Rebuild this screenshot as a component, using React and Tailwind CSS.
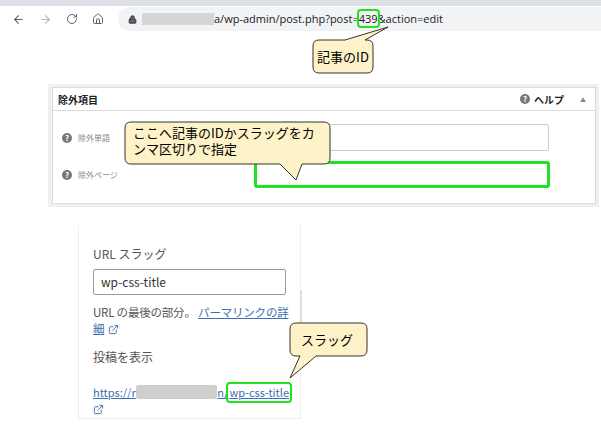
import React from "react";
import { ArrowLeft, ArrowRight, RotateCw, Home, Lock, ExternalLink } from "lucide-react";

// rounded callout with tail, drawn as one shape
function Callout({ box, tip, base, children, className }) {
  const [x, y, w, h] = box;
  const [b1, b2] = base;
  const r = 6;
  const onTop = tip[1] < y;
  const L = x, T = y, R = x + w, B = y + h;
  const d = onTop
    ? `M${L + r},${T} L${b1},${T} L${tip[0]},${tip[1]} L${b2},${T} L${R - r},${T} Q${R},${T} ${R},${T + r} L${R},${B - r} Q${R},${B} ${R - r},${B} L${L + r},${B} Q${L},${B} ${L},${B - r} L${L},${T + r} Q${L},${T} ${L + r},${T} Z`
    : `M${L + r},${T} L${R - r},${T} Q${R},${T} ${R},${T + r} L${R},${B - r} Q${R},${B} ${R - r},${B} L${b2},${B} L${tip[0]},${tip[1]} L${b1},${B} L${L + r},${B} Q${L},${B} ${L},${B - r} L${L},${T + r} Q${L},${T} ${L + r},${T} Z`;
  return (
    <>
      <svg className="absolute left-0 top-0 pointer-events-none" width="601" height="426">
        <path d={d} fill="#fdf2c8" stroke="#333" strokeWidth="1" />
      </svg>
      <div
        className={"absolute text-black " + className}
        style={{ left: x, top: y, width: w, height: h }}
      >
        {children}
      </div>
    </>
  );
}

function Help() {
  return (
    <span className="inline-flex w-[10px] h-[10px] rounded-full bg-[#777] text-white text-[8px] font-bold items-center justify-center leading-none">?</span>
  );
}

export default function App() {
  return (
    <div className="relative w-[601px] h-[426px] bg-white overflow-hidden text-[#3c434a]" style={{ fontFamily: "'Noto Sans CJK JP', 'Noto Sans', sans-serif" }}>
      <div className="h-[6px] bg-[#dee1e6]" />
      <div className="flex items-center h-[26px] pl-[12px] gap-[14px] text-[#5f6368]">
        <ArrowLeft size={13} />
        <ArrowRight size={13} className="text-[#b8b8b8]" />
        <RotateCw size={12} />
        <Home size={12} />
        <div className="flex-1 h-[24px] rounded-l-full bg-[#f1f3f4] flex items-center pl-[10px] gap-[5px] text-[11px] text-[#202124]" style={{ fontFamily: "'Open Sans', sans-serif" }}>
          <Lock size={9} fill="#5f6368" />
          <div className="w-[72px] h-[12px] bg-[#d6d6d6]" />
          <span className="-ml-[5px] whitespace-nowrap">
            a/wp-admin/post.php?post=
            <span className="outline-2 outline-[#22e022] rounded-[2px]">439</span>
            &amp;action=edit
          </span>
        </div>
      </div>

      {/* panel */}
      <div className="absolute left-[48px] top-[84px] w-[551px] h-[123px] bg-[#f0f0f1] p-[3px] pl-[4px]">
        <div className="bg-white border border-[#dcdcde] h-full">
          <div className="flex items-center h-[23px] px-[5px] border-b border-[#dcdcde] text-[10px] font-bold text-[#1d2327]">
            <span>除外項目</span>
            <span className="ml-auto flex items-center gap-[4px]"><Help />ヘルプ</span>
            <span className="ml-[16px] mr-[4px] text-[6px] text-[#888]">▲</span>
          </div>
          <div className="flex items-center mt-[13px] pl-[9px]">
            <span className="flex items-center gap-[6px] w-[192px] text-[8px] text-[#888]"><Help />除外単語</span>
            <div className="w-[295px] h-[27px] border border-[#ccc] rounded-[2px]" />
          </div>
          <div className="flex items-center mt-[10px] pl-[9px]">
            <span className="flex items-center gap-[6px] w-[192px] text-[8px] text-[#888]"><Help />除外ページ</span>
            <div className="w-[296px] h-[27px] border-[3px] border-[#22e022] rounded-[3px]" />
          </div>
        </div>
      </div>

      {/* sidebar */}
      <div className="absolute left-[78px] top-[225px] w-[223px] h-[194px] border-x border-b border-[#eee] pl-[14px] pr-[10px] text-[12px] text-[#555]">
        <div className="mt-[20px]">URL スラッグ</div>
        <div className="mt-[6px] w-[193px] h-[26px] border border-[#999] rounded-[2px] px-[7px] flex items-center text-[#333] text-[12px]">wp-css-title</div>
        <div className="mt-[9px] leading-[16px] text-[11.5px] tracking-[-0.2px]">
          URL の最後の部分。 <span className="text-[#3c6fb0] underline">パーマリンクの詳細</span>
          <ExternalLink size={11} className="inline ml-[4px] text-[#3c6fb0]" />
        </div>
        <div className="mt-[12px]">投稿を表示</div>
        <div className="mt-[18px] flex items-center text-[#3c6fb0] underline whitespace-nowrap text-[11px]">
          <span>https://r</span>
          <div className="w-[84px] h-[14px] bg-[#cfcfcf] rounded-[2px]" />
          <span>n/</span>
          <span className="outline-2 outline-[#22e022] rounded-[2px] px-[1px]">wp-css-title</span>
        </div>
        <ExternalLink size={11} className="mt-[3px] text-[#3c6fb0]" />
      </div>
      <div className="absolute left-[300px] top-[290px] w-[2px] h-[40px] bg-[#ddd]" />

      <Callout box={[313, 40, 60, 33]} tip={[388, 27]} base={[345, 365]} className="flex items-center justify-center text-[13px]">
        記事のID
      </Callout>
      <Callout box={[125, 122, 205, 42]} tip={[296, 180]} base={[280, 302]} className="px-[8px] pt-[3px] text-[13px] leading-[16px]">
        ここへ記事のIDかスラッグをカンマ区切りで指定
      </Callout>
      <Callout box={[290, 323, 77, 33]} tip={[290, 378]} base={[300, 316]} className="flex items-center pl-[11px] text-[13px]">
        スラッグ
      </Callout>
    </div>
  );
}
